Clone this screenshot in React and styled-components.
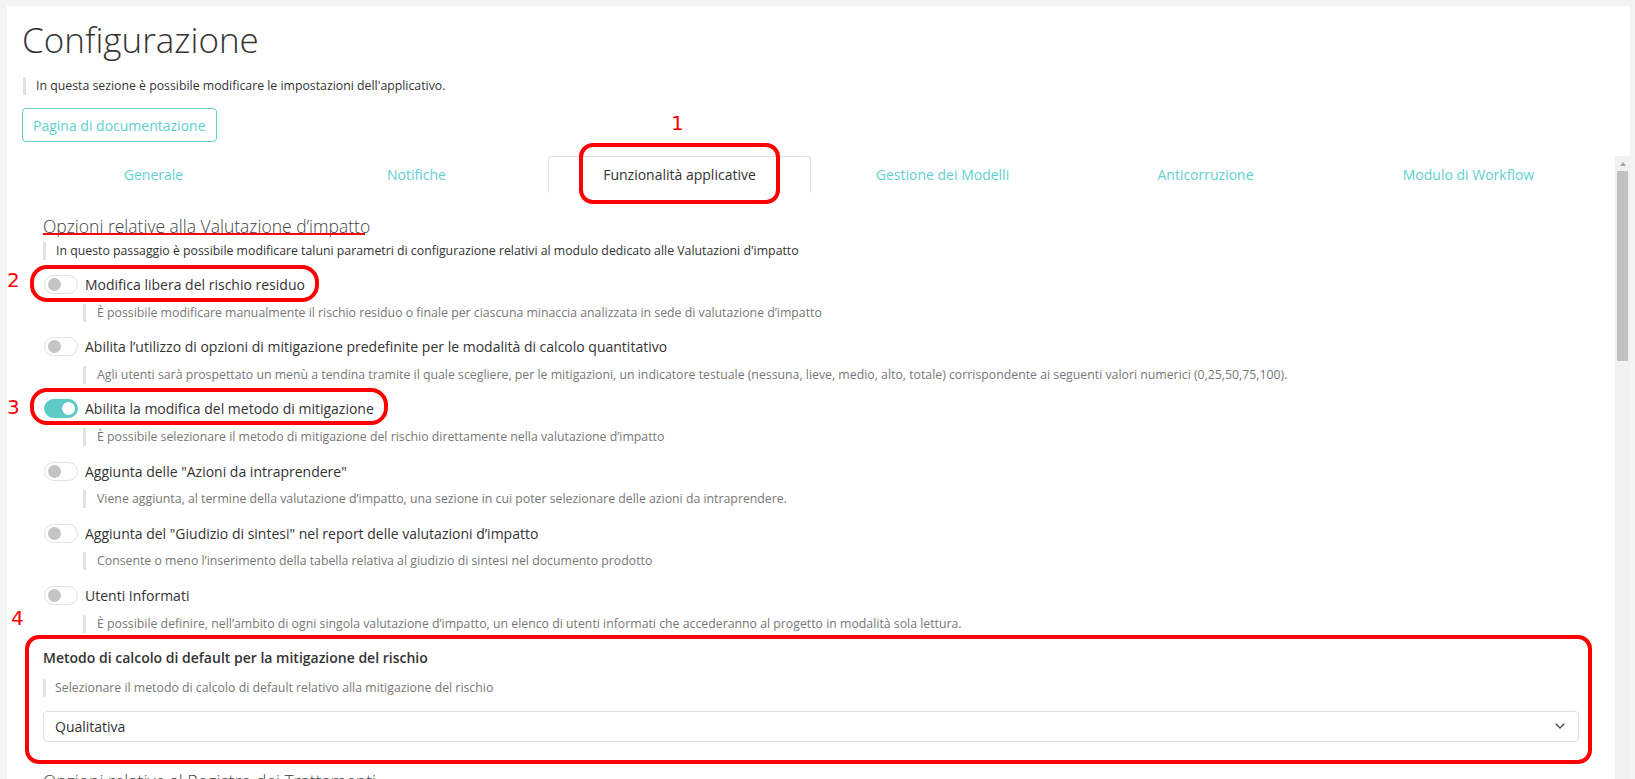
import React from 'react';
import styled, { createGlobalStyle } from 'styled-components';
import { ChevronDown } from 'lucide-react';

const GlobalStyle = createGlobalStyle`
  html, body { margin: 0; padding: 0; height: 100%; overflow: hidden; background: #f3f3f3; }
  body { font-family: "Open Sans", "Liberation Sans", sans-serif; color: #333; }
  #root { height: 100%; }
  * { box-sizing: border-box; }
`;

const Page = styled.div`
  position: relative;
  height: 100%;
  padding: 6px 5px 0 7px;
  display: flex;
  align-items: flex-start;
`;

const Card = styled.main`
  flex: 1;
  min-width: 0;
  background: #fff;
  display: flex;
  flex-direction: column;
`;

const Header = styled.header`
  padding: 14px 15px 14px;
  display: flex;
  flex-direction: column;
  align-items: flex-start;
`;

const Title = styled.h1`
  margin: 0;
  font-weight: 300;
  font-size: 35px;
  line-height: 40px;
  color: #333;
`;

const Note = styled.p`
  margin: ${(p) => p.$mt || 0}px 0 0 ${(p) => p.$ml || 0}px;
  padding-left: ${(p) => p.$pl || 10}px;
  border-left: 3px solid #e2e2e2;
  font-size: 12.3px;
  line-height: 18px;
  color: ${(p) => (p.$muted ? '#777' : '#333')};
`;

const DocButton = styled.button`
  margin-top: 13px;
  height: 34px;
  padding: 0 10px;
  background: #fff;
  border: 1px solid #5fd0cf;
  border-radius: 4px;
  color: #5fcfcf;
  font-family: inherit;
  font-size: 14px;
`;

const Body = styled.div`
  display: flex;
  height: 720px;
`;

const Scroller = styled.div`
  flex: 1;
  min-width: 0;
  overflow: hidden;
  padding: 0 15px;
`;

const ScrollRail = styled.div`
  flex: none;
  width: 15px;
  background: #f1f1f1;
  display: flex;
  flex-direction: column;
  align-items: stretch;
`;

const RailArrow = styled.div`
  height: 15px;
  display: flex;
  align-items: center;
  justify-content: center;
  &::before {
    content: '';
    border-left: 3.5px solid transparent;
    border-right: 3.5px solid transparent;
    border-bottom: 4px solid #a3a3a3;
  }
`;

const RailThumb = styled.div`
  height: 190px;
  margin: 0 2px;
  background: #c1c1c1;
`;

const TabList = styled.nav`
  display: flex;
  border-bottom: 1px solid #dedede;
`;

const Tab = styled.div`
  flex: 1;
  height: 37px;
  margin-bottom: -1px;
  display: flex;
  align-items: center;
  justify-content: center;
  font-size: 14px;
  color: ${(p) => (p.$active ? '#333' : '#5fd0d0')};
  background: #fff;
  border: 1px solid ${(p) => (p.$active ? '#dedede' : 'transparent')};
  border-bottom-color: ${(p) => (p.$active ? '#fff' : 'transparent')};
  border-radius: 4px 4px 0 0;
`;

const Section = styled.section`
  padding: 21px 21px 0;
`;

const SectionTitle = styled.h2`
  margin: 0;
  font-weight: 300;
  font-size: 17.5px;
  line-height: 24px;
  color: #444;
`;

const Items = styled.div`
  margin-top: 12.6px;
  display: flex;
  flex-direction: column;
  gap: 13.2px;
`;

const Item = styled.div`
  display: flex;
  flex-direction: column;
`;

const ToggleRow = styled.label`
  display: flex;
  align-items: center;
  gap: 7px;
  height: 24px;
  padding-left: 1px;
  font-size: 14px;
  color: #333;
`;

const Switch = styled.span`
  position: relative;
  flex: none;
  width: 34px;
  height: 19px;
  border-radius: 10px;
  border: 1px solid ${(p) => (p.$on ? '#5ccbc8' : '#e2e2e2')};
  background: ${(p) => (p.$on ? '#5ccbc8' : '#fff')};
  &::after {
    content: '';
    position: absolute;
    top: 2px;
    left: ${(p) => (p.$on ? '17px' : '3px')};
    width: 13px;
    height: 13px;
    border-radius: 50%;
    background: ${(p) => (p.$on ? '#fff' : '#c4c4c4')};
  }
`;

const FieldLabel = styled.div`
  margin-top: 15px;
  font-size: 14px;
  font-weight: 600;
  line-height: 20px;
  color: #333;
`;

const Select = styled.div`
  margin-top: 14px;
  height: 31px;
  border: 1px solid #dedede;
  border-radius: 4px;
  padding: 0 10px 0 11px;
  display: flex;
  align-items: center;
  justify-content: space-between;
  font-size: 14px;
  color: #333;
`;

const NextSection = styled(Section)`
  padding-top: 27px;
`;

const Mark = styled.div`
  position: absolute;
  left: ${(p) => p.$x}px;
  top: ${(p) => p.$y}px;
  width: ${(p) => p.$w}px;
  height: ${(p) => p.$h}px;
  border: 4px solid #ff0000;
  border-radius: ${(p) => p.$r}px;
  pointer-events: none;
`;

const Num = styled.span`
  position: absolute;
  left: ${(p) => p.$x}px;
  top: ${(p) => p.$y}px;
  font-family: "DejaVu Sans", sans-serif;
  font-size: 20px;
  line-height: 20px;
  color: #ff0000;
`;

const Underline = styled.div`
  position: absolute;
  left: 43px;
  top: 233px;
  width: 322px;
  height: 2px;
  background: #ff0000;
`;

const tabs = ['Generale', 'Notifiche', 'Funzionalità applicative', 'Gestione dei Modelli', 'Anticorruzione', 'Modulo di Workflow'];

const options = [
  {
    label: 'Modifica libera del rischio residuo',
    desc: 'È possibile modificare manualmente il rischio residuo o finale per ciascuna minaccia analizzata in sede di valutazione d’impatto',
  },
  {
    label: 'Abilita l’utilizzo di opzioni di mitigazione predefinite per le modalità di calcolo quantitativo',
    desc: 'Agli utenti sarà prospettato un menù a tendina tramite il quale scegliere, per le mitigazioni, un indicatore testuale (nessuna, lieve, medio, alto, totale) corrispondente ai seguenti valori numerici (0,25,50,75,100).',
  },
  {
    label: 'Abilita la modifica del metodo di mitigazione',
    desc: 'È possibile selezionare il metodo di mitigazione del rischio direttamente nella valutazione d’impatto',
    on: true,
  },
  {
    label: 'Aggiunta delle "Azioni da intraprendere"',
    desc: 'Viene aggiunta, al termine della valutazione d’impatto, una sezione in cui poter selezionare delle azioni da intraprendere.',
  },
  {
    label: 'Aggiunta del "Giudizio di sintesi" nel report delle valutazioni d’impatto',
    desc: 'Consente o meno l’inserimento della tabella relativa al giudizio di sintesi nel documento prodotto',
  },
  {
    label: 'Utenti Informati',
    desc: 'È possibile definire, nell’ambito di ogni singola valutazione d’impatto, un elenco di utenti informati che accederanno al progetto in modalità sola lettura.',
  },
];

export default function App() {
  return (
    <>
      <GlobalStyle />
      <Page>
        <Card>
          <Header>
            <Title>Configurazione</Title>
            <Note $mt={17} $ml={1} $pl={10}>In questa sezione è possibile modificare le impostazioni dell'applicativo.</Note>
            <DocButton>Pagina di documentazione</DocButton>
          </Header>
          <Body>
            <Scroller>
              <TabList>
                {tabs.map((t, i) => (
                  <Tab key={t} $active={i === 2}>{t}</Tab>
                ))}
              </TabList>
              <Section>
                <SectionTitle>Opzioni relative alla Valutazione d’impatto</SectionTitle>
                <Note $mt={4}>In questo passaggio è possibile modificare taluni parametri di configurazione relativi al modulo dedicato alle Valutazioni d'impatto</Note>
                <Items>
                  {options.map((o) => (
                    <Item key={o.label}>
                      <ToggleRow>
                        <Switch $on={o.on} />
                        {o.label}
                      </ToggleRow>
                      <Note $mt={7} $ml={40} $pl={11} $muted>{o.desc}</Note>
                    </Item>
                  ))}
                </Items>
                <FieldLabel>Metodo di calcolo di default per la mitigazione del rischio</FieldLabel>
                <Note $mt={11} $pl={9} $muted>Selezionare il metodo di calcolo di default relativo alla mitigazione del rischio</Note>
                <Select>
                  Qualitativa
                  <ChevronDown size={16} strokeWidth={1.8} color="#444" />
                </Select>
              </Section>
              <NextSection>
                <SectionTitle>Opzioni relative al Registro dei Trattamenti</SectionTitle>
              </NextSection>
            </Scroller>
            <ScrollRail>
              <RailArrow />
              <RailThumb />
            </ScrollRail>
          </Body>
        </Card>
        <Num $x={671} $y={113}>1</Num>
        <Mark $x={579} $y={143} $w={201} $h={61} $r={14} />
        <Underline />
        <Num $x={7} $y={270}>2</Num>
        <Mark $x={30} $y={265} $w={289} $h={37} $r={17} />
        <Num $x={7} $y={397}>3</Num>
        <Mark $x={30} $y={388} $w={358} $h={37} $r={17} />
        <Num $x={11} $y={608}>4</Num>
        <Mark $x={25} $y={635} $w={1567} $h={129} $r={14} />
      </Page>
    </>
  );
}
